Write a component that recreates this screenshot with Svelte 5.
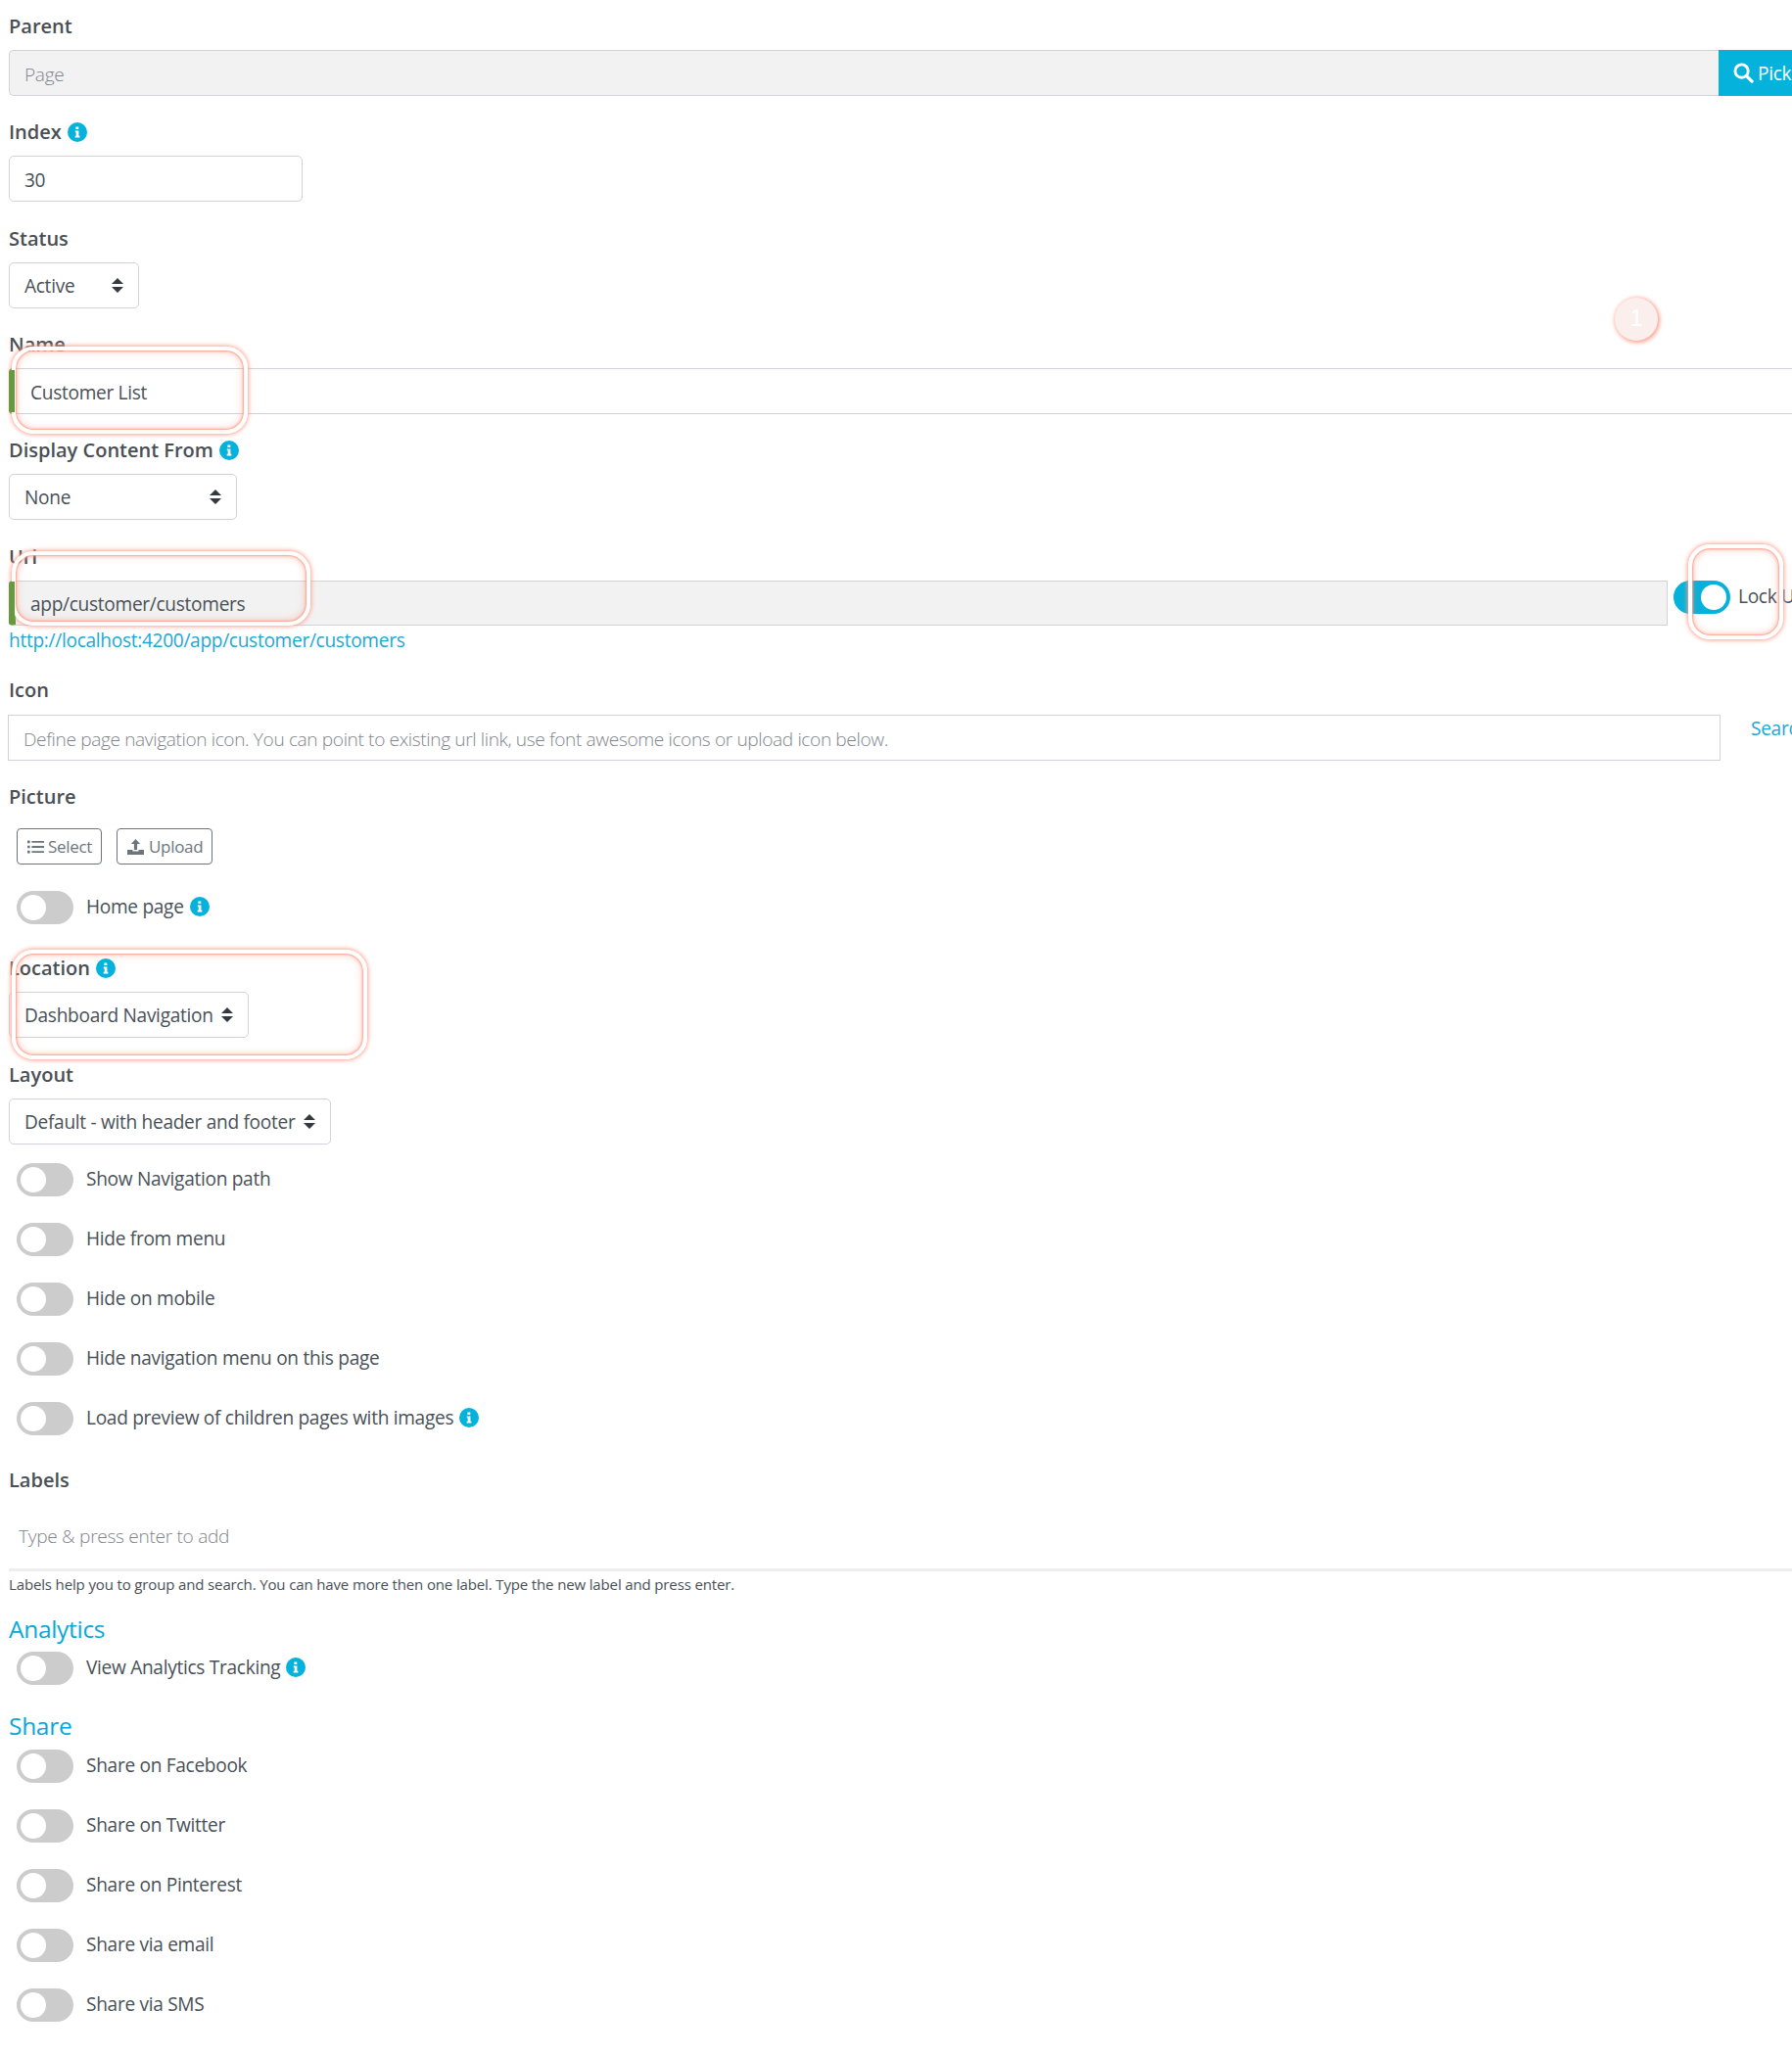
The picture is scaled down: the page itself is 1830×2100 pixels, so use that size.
<script>
  const group1 = [
    { text: 'Show Navigation path' },
    { text: 'Hide from menu' },
    { text: 'Hide on mobile' },
    { text: 'Hide navigation menu on this page' },
    { text: 'Load preview of children pages with images', info: true }
  ];
  const share = ['Share on Facebook', 'Share on Twitter', 'Share on Pinterest', 'Share via email', 'Share via SMS'];
</script>

{#snippet info()}
  <svg class="info" viewBox="0 0 20 20" aria-hidden="true">
    <circle cx="10" cy="10" r="10" fill="#05b2dc" />
    <path d="M8.4 4.4h2.9v2.5H8.4zM7.8 8.4h3.6v5.4h1v1.8H7.7v-1.8h1v-3.6h-.9z" fill="#fff" />
  </svg>
{/snippet}

{#snippet sort()}
  <svg class="sort" viewBox="0 0 12 15" aria-hidden="true">
    <path d="M6 0l6 6H0zM0 9h12l-6 6z" fill="#343a40" />
  </svg>
{/snippet}

{#snippet toggle(text, hasInfo)}
  <div class="switch-row">
    <span class="toggle"><span class="knob"></span></span>
    <span class="switch-text">{text}</span>
    {#if hasInfo}{@render info()}{/if}
  </div>
{/snippet}

<div class="page">
  <div class="field parent">
    <div class="label">Parent</div>
    <div class="group">
      <input class="control ro first" readonly placeholder="Page" />
      <button class="pick">
        <svg class="search" viewBox="0 0 22 22" aria-hidden="true">
          <circle cx="9" cy="9" r="7" fill="none" stroke="#fff" stroke-width="3" />
          <path d="M14 14l6 6" stroke="#fff" stroke-width="3.4" stroke-linecap="round" />
        </svg>
        Pick
      </button>
    </div>
  </div>

  <div class="field index">
    <div class="label">Index {@render info()}</div>
    <input class="control w-index" value="30" />
  </div>

  <div class="field status">
    <div class="label">Status</div>
    <div class="select w-status">Active {@render sort()}</div>
  </div>

  <div class="field name">
    <div class="label">Name</div>
    <input class="control valid wide" value="Customer List" />
  </div>

  <div class="field display">
    <div class="label">Display Content From {@render info()}</div>
    <div class="select w-display">None {@render sort()}</div>
  </div>

  <div class="field uri">
    <div class="label">Uri</div>
    <div class="uri-row">
      <input class="control valid ro-text" readonly value="app/customer/customers" />
      <div class="lock">
        <span class="toggle on"><span class="knob"></span></span>
        <span class="lock-text">Lock Uri</span>
      </div>
    </div>
    <a class="link" href="#top">http://localhost:4200/app/customer/customers</a>
  </div>

  <div class="field icon">
    <div class="label">Icon</div>
    <div class="icon-row">
      <input class="control square" placeholder="Define page navigation icon. You can point to existing url link, use font awesome icons or upload icon below." />
      <a class="search-link" href="#top">Search</a>
    </div>
  </div>

  <div class="field picture">
    <div class="label">Picture</div>
    <div class="buttons">
      <button class="outline b-select">
        <svg viewBox="0 0 17 14" aria-hidden="true">
          <path d="M0 .6h2.6v2.6H0zM0 5.7h2.6v2.6H0zM0 10.8h2.6v2.6H0zM4.4 1h12.6v1.8H4.4zM4.4 6.1h12.6v1.8H4.4zM4.4 11.2h12.6v1.8H4.4z" fill="#6c757d" />
        </svg>
        Select
      </button>
      <button class="outline b-upload">
        <svg viewBox="0 0 17 16" aria-hidden="true">
          <path d="M8.5 0l4.6 5h-3v6H6.9V5h-3zM0 11h5.4v1.4h6.2V11H17v5H0z" fill="#6c757d" />
        </svg>
        Upload
      </button>
    </div>
  </div>

  <div class="home">{@render toggle('Home page', true)}</div>

  <div class="field location">
    <div class="label">Location {@render info()}</div>
    <div class="select w-location">Dashboard Navigation {@render sort()}</div>
  </div>

  <div class="field layout">
    <div class="label">Layout</div>
    <div class="select w-layout">Default - with header and footer {@render sort()}</div>
  </div>

  <div class="switches">
    {#each group1 as s}
      {@render toggle(s.text, s.info)}
    {/each}
  </div>

  <div class="field labels">
    <div class="label">Labels</div>
    <input class="tags" placeholder="Type &amp; press enter to add" />
    <div class="help">Labels help you to group and search. You can have more then one label. Type the new label and press enter.</div>
  </div>

  <h3 class="section analytics">Analytics</h3>
  {@render toggle('View Analytics Tracking', true)}

  <h3 class="section share">Share</h3>
  <div class="switches">
    {#each share as s}
      {@render toggle(s, false)}
    {/each}
  </div>

  <div class="note n-name"></div>
  <div class="note n-uri"></div>
  <div class="note n-lock"></div>
  <div class="note n-location"></div>
  <div class="bar b-name"></div>
  <div class="bar b-uri"></div>
  <div class="badge">1</div>
</div>

<style>
  :global(body) { margin: 0; background: #fff; }
  .page {
    position: relative;
    width: 1830px;
    height: 2100px;
    overflow: hidden;
    box-sizing: border-box;
    padding: 13px 0 0 9px;
    font-family: "Open Sans", "Noto Sans", sans-serif;
    font-size: 19.1px;
    letter-spacing: -0.3px;
    color: #495057;
  }
  .label {
    display: flex;
    align-items: center;
    gap: 6px;
    height: 27px;
    font-weight: 600;
    font-size: 20px;
    letter-spacing: 0;
    color: #4a4f55;
    margin-bottom: 11px;
  }
  .field { margin-bottom: 23px; }
  .group { display: flex; width: 1821px; }
  .control {
    box-sizing: border-box;
    height: 47px;
    padding: 2px 15px 0;
    border: 1.5px solid #d0d3d8;
    border-radius: 5px;
    background: #fff;
    font: inherit;
    letter-spacing: inherit;
    color: #495057;
    outline: none;
  }
  .control::placeholder, .tags::placeholder { color: #80858b; opacity: 1; font-weight: 300; }
  .square::placeholder { letter-spacing: -0.37px; }
  .first { flex: none; width: 1746px; background: #f2f2f2; border-radius: 5px 0 0 5px; border-right: 0; }
  .pick {
    flex: none;
    width: 80px;
    display: flex;
    align-items: center;
    gap: 4px;
    padding: 0 0 0 15px;
    border: 0;
    background: #05b2dc;
    color: #fff;
    font: inherit;
    letter-spacing: inherit;
    white-space: nowrap;
  }
  .search { width: 21px; height: 21px; flex: none; }
  .info { width: 20px; height: 20px; flex: none; }
  .sort { width: 12px; height: 15px; flex: none; }
  .w-index { display: block; width: 300px; height: 47px; }
  .select {
    box-sizing: border-box;
    display: flex;
    align-items: center;
    justify-content: space-between;
    height: 47px;
    padding: 0 15px;
    border: 1.5px solid #d0d3d8;
    border-radius: 5px;
    white-space: nowrap;
  }
  .index { margin-bottom: 24px; }
  .display { margin-bottom: 24px; }
  .w-status { width: 133px; }
  .w-display { width: 233px; }
  .w-location { width: 245px; }
  .w-layout { width: 329px; }
  .valid {
    border-left: 7px solid #5d9a32;
    padding-left: 15px;
    border-radius: 4px 0 0 4px;
    border-right: 0;
  }
  .wide { display: block; width: 1830px; }
  .uri-row { display: flex; align-items: flex-start; width: 1860px; }
  .ro-text { flex: none; width: 1694px; height: 46px; background: #f2f2f2; border-right: 1.5px solid #d0d3d8; }
  .lock { display: flex; align-items: center; gap: 8px; margin-left: 6px; white-space: nowrap; }
  .lock-text { margin-bottom: 3px; }
  .link {
    display: block;
    margin-top: 2px;
    height: 27px;
    line-height: 27px;
    color: #1aa8d8;
    text-decoration: none;
  }
  .icon .label { margin-bottom: 12px; }
  .icon-row { display: flex; align-items: flex-start; margin-left: -1px; }
  .square { flex: none; width: 1749px; border-radius: 0; }
  .search-link { margin: 1px 0 0 31px; color: #1aa8d8; text-decoration: none; line-height: 27px; }
  .picture .label { margin-bottom: 19px; }
  .buttons { display: flex; gap: 15px; margin-left: 8px; }
  .outline {
    box-sizing: border-box;
    display: flex;
    align-items: center;
    gap: 4px;
    height: 37px;
    padding: 0 0 0 10px;
    border: 1.5px solid #6c757d;
    border-radius: 4px;
    background: #fff;
    color: #6c757d;
    font: inherit;
    font-size: 17px;
    letter-spacing: -0.3px;
  }
  .b-select { width: 87px; }
  .b-upload { width: 98px; gap: 5px; }
  .outline svg { width: 17px; height: 16px; flex: none; }
  .switch-row {
    display: flex;
    align-items: center;
    height: 34px;
    padding-left: 8px;
    gap: 6px;
  }
  .switch-text { margin-left: 7px; margin-bottom: 3px; }
  .switch-row .info { margin-bottom: 3px; }
  .toggle {
    position: relative;
    display: block;
    flex: none;
    width: 58px;
    height: 34px;
    border-radius: 17px;
    background: #ccc;
  }
  .toggle.on { background: #05b2dc; }
  .knob {
    position: absolute;
    left: 4px;
    top: 4px;
    width: 26px;
    height: 26px;
    border-radius: 50%;
    background: #fff;
  }
  .on .knob { left: 28px; }
  .home { margin: 27px 0 31px; }
  .location { margin-bottom: 24px; }
  .layout { margin-bottom: 19px; }
  .switches { display: flex; flex-direction: column; gap: 27px; }
  .labels { margin-top: 32px; }
  .tags {
    display: block;
    box-sizing: border-box;
    width: 1821px;
    height: 69px;
    padding: 0 10px;
    border: 0;
    border-bottom: 3px solid #eee;
    font: inherit;
    letter-spacing: inherit;
    outline: none;
  }
  .help { font-size: 15px; letter-spacing: -0.14px; line-height: 20px; margin-top: 3px; }
  .section {
    margin: 0;
    font-weight: 400;
    font-size: 24.5px;
    line-height: 32px;
    color: #05a9d6;
  }
  .analytics { margin-top: -3px; margin-bottom: 7px; }
  .share { margin-top: 26px; margin-bottom: 8px; }
  .note {
    position: absolute;
    box-sizing: border-box;
    border: 4px solid #fff;
    border-radius: 22px;
    box-shadow: 0 0 4px 1px #ff9f8c, inset 0 0 2px 1px #ff9f8c, inset 0 0 8px rgba(255, 110, 80, 0.45);
  }
  .n-name { left: 12px; top: 354px; width: 241px; height: 89px; }
  .n-uri { left: 12px; top: 563px; width: 305px; height: 76px; }
  .n-lock { left: 1724px; top: 556px; width: 97px; height: 97px; }
  .n-location { left: 12px; top: 970px; width: 363px; height: 112px; }
  .bar {
    position: absolute;
    left: 9px;
    width: 6px;
    background: #679a3c;
    border-radius: 3px 0 0 3px;
  }
  .b-name { top: 378px; height: 43px; }
  .b-uri { top: 594px; height: 44px; }
  .badge {
    position: absolute;
    left: 1649px;
    top: 304px;
    box-sizing: border-box;
    width: 44px;
    height: 44px;
    border-radius: 50%;
    background: #faefed;
    box-shadow: 1px 1px 4px 1px #ff9f8c;
    color: #fff;
    font-family: "Liberation Sans", sans-serif;
    font-size: 24px;
    line-height: 42px;
    text-align: center;
  }
</style>
